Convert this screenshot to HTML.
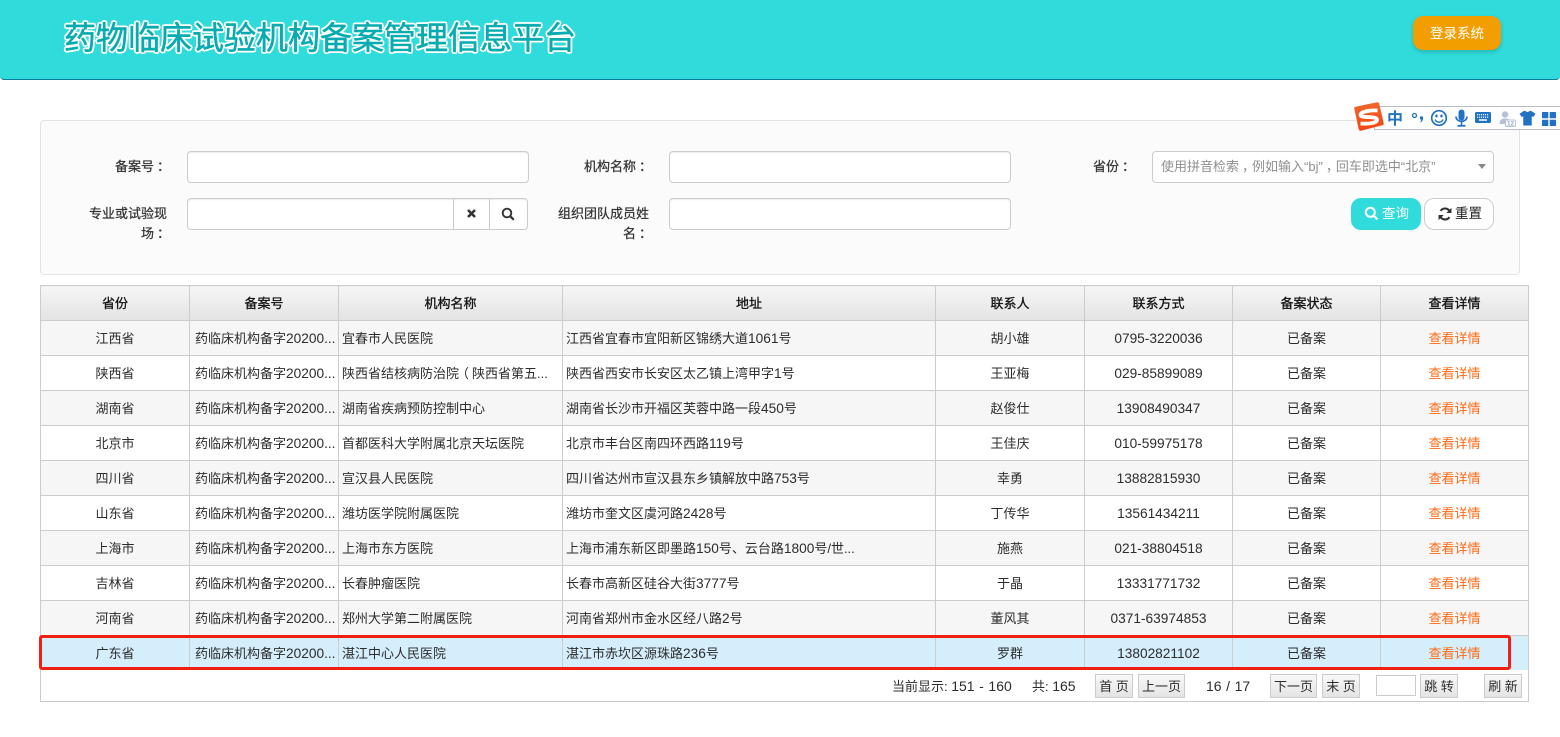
<!DOCTYPE html>
<html lang="zh-CN"><head><meta charset="utf-8"><title>药物临床试验机构备案管理信息平台</title>
<style>
*{box-sizing:border-box}
html,body{margin:0;padding:0;width:1560px;height:737px;overflow:hidden;background:#fff;font-family:"Liberation Sans","Noto Sans CJK SC",sans-serif;font-size:13px;color:#2c2c2c}
.a{position:absolute}
.cl{display:inline-block;transform:translateX(3px)}
.pr{display:inline-block;transform:translateX(-3px)}
#hd{left:0;top:0;width:1560px;height:80px;background:#30dbdb;border-bottom:1px solid #0e7d99;border-radius:0 0 4px 4px}
#title{left:64px;top:14px;font-size:32px;line-height:44px;white-space:nowrap;color:#07abb0;font-family:"Noto Sans CJK SC",sans-serif;-webkit-text-stroke:.5px #07abb0;
text-shadow:2px 0 0 #fff,-2px 0 0 #fff,0 2px 0 #fff,0 -2px 0 #fff,1.5px 1.5px 0 #fff,-1.5px 1.5px 0 #fff,1.5px -1.5px 0 #fff,-1.5px -1.5px 0 #fff,0 0 3px #d8ffff}
#login{left:1413px;top:16px;width:88px;height:34px;background:#f39e00;border-radius:10px;color:#fff;text-align:center;line-height:35px;font-size:13.5px;box-shadow:0 2px 4px rgba(0,0,0,.18)}
#panel{left:40px;top:120px;width:1480px;height:155px;background:#fbfbfb;border:1px solid #e3e3e3;border-radius:4px}
.inp{background:#fff;border:1px solid #ccc;border-radius:4px;height:32px;box-shadow:inset 0 1px 1px rgba(0,0,0,.075)}
.lb{font-weight:400;color:#333;text-align:right;line-height:20px;-webkit-text-stroke:.25px #333;white-space:nowrap}
table{position:absolute;left:40px;top:285px;width:1488px;border-collapse:collapse;table-layout:fixed}
th,td{border:1px solid #ccc;height:35px;padding:2px 5px 0;text-align:center;white-space:nowrap;overflow:hidden;font-size:13px;line-height:18px}
td.l{text-align:left;padding-left:3px}
td.c2{padding-left:5px;padding-right:0;text-align:left}
th{background:linear-gradient(#f6f6f6,#e3e3e3);color:#111;font-weight:400;-webkit-text-stroke:.3px #111}
tr.o td{background:#f6f6f6}
tr.s td{background:#d5eefb}
td.v{color:#ff6a13}
.n{font-size:13.7px}
#foot{left:40px;top:670px;width:1489px;height:32px;border:1px solid #ccc;border-top:0;background:#fff}
.t{white-space:nowrap;line-height:18px;top:677px;color:#2c2c2c}
.t .n{font-size:14px;word-spacing:.7px}
.b{top:674px;height:24px;background:linear-gradient(#f8f8f8,#e4e4e4);border:1px solid #ccc;text-align:center;line-height:23px;font-size:13px;color:#2c2c2c;white-space:nowrap}
#red{left:39px;top:635px;width:1472px;height:35px;border:3px solid #f01f12;border-radius:3px}
</style></head><body>
<div class="a" id="hd"></div>
<div class="a" id="title">药物临床试验机构备案管理信息平台</div>
<div class="a" id="login">登录系统</div>

<div class="a" id="panel"></div>
<div class="a lb" style="left:60px;top:157px;width:107px">备案号<span class="cl">：</span></div>
<div class="a inp" style="left:187px;top:151px;width:342px"></div>
<div class="a lb" style="left:548px;top:157px;width:101px">机构名称<span class="cl">：</span></div>
<div class="a inp" style="left:669px;top:151px;width:342px"></div>
<div class="a lb" style="left:1040px;top:157px;width:92px">省份<span class="cl">：</span></div>
<div class="a inp" style="left:1152px;top:151px;width:342px;box-shadow:none"></div>
<div class="a" style="left:1161px;top:158px;color:#8f8f8f;white-space:nowrap;line-height:18px">使用拼音检索<span class="cl">，</span>例如输入“bj”<span class="cl">，</span>回车即选中“北京”</div>
<div class="a" style="left:1478px;top:164px;width:0;height:0;border:4.5px solid transparent;border-top:5px solid #888;border-bottom:0"></div>

<div class="a lb" style="left:60px;top:204px;width:107px">专业或试验现</div>
<div class="a lb" style="left:60px;top:224px;width:107px">场<span class="cl">：</span></div>
<div class="a inp" style="left:187px;top:198px;width:341px"></div>
<div class="a" style="left:453px;top:199px;width:1px;height:30px;background:#ccc"></div>
<div class="a" style="left:489px;top:199px;width:1px;height:30px;background:#ccc"></div>
<svg class="a" style="left:466px;top:208px" width="11" height="11" viewBox="0 0 11 11"><path d="M2 2L9 9M9 2L2 9" stroke="#333" stroke-width="2.6" fill="none"/></svg>
<svg class="a" style="left:501px;top:207px" width="14" height="14" viewBox="0 0 14 14"><circle cx="6" cy="6" r="4.3" stroke="#333" stroke-width="1.9" fill="none"/><path d="M9.2 9.2L12.8 12.8" stroke="#333" stroke-width="2.2"/></svg>
<div class="a lb" style="left:548px;top:204px;width:101px">组织团队成员姓</div>
<div class="a lb" style="left:548px;top:224px;width:101px">名<span class="cl">：</span></div>
<div class="a inp" style="left:669px;top:198px;width:342px"></div>

<div class="a" style="left:1351px;top:198px;width:70px;height:32px;background:#30dbdb;border-radius:10px"></div>
<svg class="a" style="left:1364px;top:206px" width="15" height="15" viewBox="0 0 15 15"><circle cx="6.3" cy="6.3" r="4.5" stroke="#fff" stroke-width="2" fill="none"/><path d="M9.6 9.6L13.4 13.4" stroke="#fff" stroke-width="2.3"/></svg>
<div class="a" style="left:1382px;top:205px;color:#fff;line-height:18px;white-space:nowrap;font-size:13.5px">查询</div>
<div class="a" style="left:1424px;top:198px;width:70px;height:32px;background:#fff;border:1px solid #ccc;border-radius:10px"></div>
<svg class="a" style="left:1438px;top:207px" width="14" height="14" viewBox="0 0 13 13"><path d="M11.2 4.6A5 5 0 0 0 2.4 3.6M1.8 8.4A5 5 0 0 0 10.6 9.4" stroke="#333" stroke-width="1.9" fill="none"/><path d="M12.5 0.8V5.6H7.7Z M0.5 12.2V7.4H5.3Z" fill="#333"/></svg>
<div class="a" style="left:1455px;top:205px;color:#222;line-height:18px;white-space:nowrap;font-size:13.5px">重置</div>

<div class="a" style="left:1374px;top:106px;width:186px;height:24px;background:#fff;border:1px solid #b9bcc4;border-right:0"></div>
<svg class="a" style="left:1353px;top:102px" width="31" height="29" viewBox="0 0 31 29"><defs><linearGradient id="g" x1="0" y1="0" x2="0" y2="1"><stop offset="0" stop-color="#f0662a"/><stop offset="1" stop-color="#f34712"/></linearGradient></defs><path d="M3 6.500L24.500 2L29 21.500L7.500 27Z" fill="url(#g)" stroke="url(#g)" stroke-width="3.500" stroke-linejoin="round"/><path d="M24.500 8.500C17 8 7.500 9.500 7.500 13C7.500 16.500 23.500 13.500 24 17.500C24.500 21.500 14 22 7.500 21.500" stroke="#fff" stroke-width="3.800" fill="none"/></svg>
<div class="a" style="left:1387px;top:106px;font-size:16px;line-height:23px;color:#2272c3;font-weight:700;font-family:'Noto Sans CJK SC',sans-serif">中</div>
<svg class="a" style="left:1410px;top:110px" width="16" height="16" viewBox="0 0 16 16"><circle cx="4.500" cy="5.500" r="2" fill="none" stroke="#2272c3" stroke-width="1.300"/><circle cx="11.500" cy="8" r="1.700" fill="#2272c3"/><path d="M13 8.200C13.200 10 12 11.500 10.500 12.500L10.200 12C11 11 11.300 10.300 11.300 9.500Z" fill="#2272c3"/></svg>
<svg class="a" style="left:1430px;top:109px" width="18" height="18" viewBox="0 0 18 18"><circle cx="9" cy="9" r="7.300" fill="none" stroke="#2272c3" stroke-width="1.700"/><ellipse cx="6.500" cy="7" rx="1.200" ry="1.500" fill="#2272c3"/><ellipse cx="11.500" cy="7" rx="1.200" ry="1.500" fill="#2272c3"/><path d="M5 10.500C6.500 14 11.500 14 13 10.500" fill="none" stroke="#2272c3" stroke-width="1.500"/></svg>
<svg class="a" style="left:1455px;top:109px" width="13" height="18" viewBox="0 0 13 18"><rect x="3.500" y="0.500" width="6" height="11" rx="3" fill="#2272c3"/><path d="M1 7.500C1 14 12 14 12 7.500M6.500 12.500V16" stroke="#2272c3" stroke-width="1.600" fill="none"/><path d="M2.500 16.800H10.500" stroke="#2272c3" stroke-width="1.800"/></svg>
<svg class="a" style="left:1475px;top:112px" width="16" height="11" viewBox="0 0 16 11"><rect x="0" y="0" width="16" height="11" rx="1.500" fill="#2272c3"/><path d="M2 2.700H14M2 5.200H14" stroke="#fff" stroke-width="1.200" stroke-dasharray="1.200 .8"/><path d="M4 8H12" stroke="#fff" stroke-width="1.500"/></svg>
<svg class="a" style="left:1499px;top:111px" width="17" height="16" viewBox="0 0 17 16"><circle cx="6" cy="3.500" r="3.200" fill="#b5c1d6"/><path d="M0.500 13C0.500 8.500 3 7.500 6 7.500C9 7.500 10.500 8.500 10.500 10V13Z" fill="#b5c1d6"/><rect x="6.500" y="9" width="10" height="6.500" rx="1" fill="#fff" stroke="#b5c1d6"/><text x="11.500" y="14.600" font-size="6.500" font-weight="700" text-anchor="middle" fill="#9aa8c0" font-family="Liberation Sans">12</text></svg>
<svg class="a" style="left:1519px;top:110px" width="17" height="16" viewBox="0 0 16 15"><path d="M5 .5L8 2L11 .5L15.500 3.500L13.500 6.500L12 5.800V14.500H4V5.800L2.500 6.500L.5 3.500Z" fill="#2272c3"/></svg>
<svg class="a" style="left:1542px;top:112px" width="14" height="14" viewBox="0 0 14 14"><rect x="0" y="0" width="6.300" height="6.300" rx=".5" fill="#2272c3"/><rect x="7.700" y="0" width="6.300" height="6.300" rx=".5" fill="#2272c3"/><rect x="0" y="7.700" width="6.300" height="6.300" rx=".5" fill="#2272c3"/><rect x="7.700" y="7.700" width="6.300" height="6.300" rx=".5" fill="#2272c3"/></svg>

<table>
<colgroup><col style="width:149px"><col style="width:149px"><col style="width:224px"><col style="width:373px"><col style="width:149px"><col style="width:148px"><col style="width:148px"><col style="width:148px"></colgroup>
<tr><th>省份</th><th>备案号</th><th>机构名称</th><th>地址</th><th>联系人</th><th>联系方式</th><th>备案状态</th><th>查看详情</th></tr>
<tr class="o"><td>江西省</td><td class="c2">药临床机构备字<span class="n">20200...</span></td><td class="l">宜春市人民医院</td><td class="l">江西省宜春市宜阳新区锦绣大道<span class="n">1061</span>号</td><td>胡小雄</td><td><span class="n">0795-3220036</span></td><td>已备案</td><td class="v">查看详情</td></tr>
<tr><td>陕西省</td><td class="c2">药临床机构备字<span class="n">20200...</span></td><td class="l">陕西省结核病防治院<span class="pr">（</span>陕西省第五...</td><td class="l">陕西省西安市长安区太乙镇上湾甲字<span class="n">1</span>号</td><td>王亚梅</td><td><span class="n">029-85899089</span></td><td>已备案</td><td class="v">查看详情</td></tr>
<tr class="o"><td>湖南省</td><td class="c2">药临床机构备字<span class="n">20200...</span></td><td class="l">湖南省疾病预防控制中心</td><td class="l">湖南省长沙市开福区芙蓉中路一段<span class="n">450</span>号</td><td>赵俊仕</td><td><span class="n">13908490347</span></td><td>已备案</td><td class="v">查看详情</td></tr>
<tr><td>北京市</td><td class="c2">药临床机构备字<span class="n">20200...</span></td><td class="l">首都医科大学附属北京天坛医院</td><td class="l">北京市丰台区南四环西路<span class="n">119</span>号</td><td>王佳庆</td><td><span class="n">010-59975178</span></td><td>已备案</td><td class="v">查看详情</td></tr>
<tr class="o"><td>四川省</td><td class="c2">药临床机构备字<span class="n">20200...</span></td><td class="l">宣汉县人民医院</td><td class="l">四川省达州市宣汉县东乡镇解放中路<span class="n">753</span>号</td><td>幸勇</td><td><span class="n">13882815930</span></td><td>已备案</td><td class="v">查看详情</td></tr>
<tr><td>山东省</td><td class="c2">药临床机构备字<span class="n">20200...</span></td><td class="l">潍坊医学院附属医院</td><td class="l">潍坊市奎文区虞河路<span class="n">2428</span>号</td><td>丁传华</td><td><span class="n">13561434211</span></td><td>已备案</td><td class="v">查看详情</td></tr>
<tr class="o"><td>上海市</td><td class="c2">药临床机构备字<span class="n">20200...</span></td><td class="l">上海市东方医院</td><td class="l">上海市浦东新区即墨路<span class="n">150</span>号、云台路<span class="n">1800</span>号/世...</td><td>施燕</td><td><span class="n">021-38804518</span></td><td>已备案</td><td class="v">查看详情</td></tr>
<tr><td>吉林省</td><td class="c2">药临床机构备字<span class="n">20200...</span></td><td class="l">长春肿瘤医院</td><td class="l">长春市高新区硅谷大街<span class="n">3777</span>号</td><td>于晶</td><td><span class="n">13331771732</span></td><td>已备案</td><td class="v">查看详情</td></tr>
<tr class="o"><td>河南省</td><td class="c2">药临床机构备字<span class="n">20200...</span></td><td class="l">郑州大学第二附属医院</td><td class="l">河南省郑州市金水区经八路<span class="n">2</span>号</td><td>董风其</td><td><span class="n">0371-63974853</span></td><td>已备案</td><td class="v">查看详情</td></tr>
<tr class="s"><td>广东省</td><td class="c2">药临床机构备字<span class="n">20200...</span></td><td class="l">湛江中心人民医院</td><td class="l">湛江市赤坎区源珠路<span class="n">236</span>号</td><td>罗群</td><td><span class="n">13802821102</span></td><td>已备案</td><td class="v">查看详情</td></tr>
</table>

<div class="a" id="foot"></div>
<div class="a t" style="left:892px">当前显示: <span class="n">151 - 160</span></div>
<div class="a t" style="left:1032px">共: <span class="n">165</span></div>
<div class="a b" style="left:1095px;width:38px">首 页</div>
<div class="a b" style="left:1138px;width:47px">上一页</div>
<div class="a t" style="left:1206px"><span class="n">16 / 17</span></div>
<div class="a b" style="left:1270px;width:47px">下一页</div>
<div class="a b" style="left:1322px;width:38px">末 页</div>
<div class="a" style="left:1376px;top:675px;width:40px;height:21px;border:1px solid #ccc;background:#fff"></div>
<div class="a b" style="left:1420px;width:38px">跳 转</div>
<div class="a b" style="left:1484px;width:38px">刷 新</div>
<div class="a" id="red"></div>
</body></html>
